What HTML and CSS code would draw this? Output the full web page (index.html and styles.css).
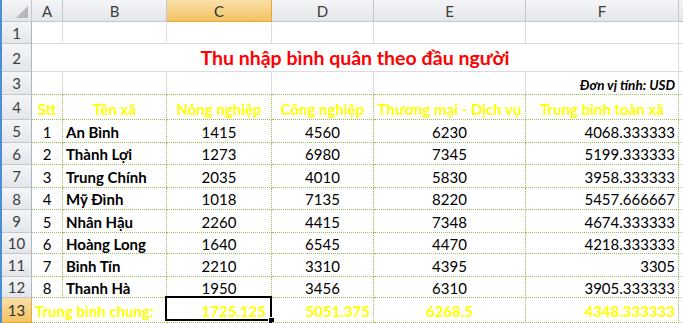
FILE: index.html
```html
<!DOCTYPE html>
<html lang="vi">
<head>
<meta charset="utf-8">
<title>Thu nhập bình quân</title>
<link rel="stylesheet" href="styles.css">
</head>
<body>
<div class="sheet">
  <div class="c h corner"><svg class="tri" width="12" height="12" viewBox="0 0 12 12"><polygon points="12,0 12,12 0,12" fill="#b4b8be"/></svg></div>
  <div class="c h">A</div>
  <div class="c h">B</div>
  <div class="c h hs">C</div>
  <div class="c h">D</div>
  <div class="c h">E</div>
  <div class="c h">F</div>
  <div class="c h"></div>

  <div class="c h rh">1</div>
  <div class="c"></div><div class="c"></div><div class="c"></div><div class="c"></div><div class="c"></div><div class="c"></div><div class="c"></div>

  <div class="c h rh">2</div>
  <div class="c title">Thu nhập bình quân theo đầu người</div>
  <div class="c"></div>

  <div class="c h rh">3</div>
  <div class="c tb"></div><div class="c tb"></div><div class="c tb"></div><div class="c tb"></div><div class="c tb"></div>
  <div class="c tb unit">Đơn vị tính: USD</div>
  <div class="c"></div>

  <div class="c h rh">4</div>
  <div class="c t th">Stt</div>
  <div class="c t th">Tên xã</div>
  <div class="c t th">Nông nghiệp</div>
  <div class="c t th">Công nghiệp</div>
  <div class="c t th">Thương mại - Dịch vụ</div>
  <div class="c t th">Trung bình toàn xã</div>
  <div class="c"></div>

  <div class="c h rh">5</div>
  <div class="c t ctr">1</div><div class="c t name">An Bình</div><div class="c t ctr">1415</div><div class="c t ctr">4560</div><div class="c t ctr">6230</div><div class="c t num">4068.333333</div>
  <div class="c"></div>

  <div class="c h rh">6</div>
  <div class="c t ctr">2</div><div class="c t name">Thành Lợi</div><div class="c t ctr">1273</div><div class="c t ctr">6980</div><div class="c t ctr">7345</div><div class="c t num">5199.333333</div>
  <div class="c"></div>

  <div class="c h rh">7</div>
  <div class="c t ctr">3</div><div class="c t name">Trung Chính</div><div class="c t ctr">2035</div><div class="c t ctr">4010</div><div class="c t ctr">5830</div><div class="c t num">3958.333333</div>
  <div class="c"></div>

  <div class="c h rh">8</div>
  <div class="c t ctr">4</div><div class="c t name">Mỹ Đình</div><div class="c t ctr">1018</div><div class="c t ctr">7135</div><div class="c t ctr">8220</div><div class="c t num">5457.666667</div>
  <div class="c"></div>

  <div class="c h rh">9</div>
  <div class="c t ctr">5</div><div class="c t name">Nhân Hậu</div><div class="c t ctr">2260</div><div class="c t ctr">4415</div><div class="c t ctr">7348</div><div class="c t num">4674.333333</div>
  <div class="c"></div>

  <div class="c h rh">10</div>
  <div class="c t ctr">6</div><div class="c t name">Hoàng Long</div><div class="c t ctr">1640</div><div class="c t ctr">6545</div><div class="c t ctr">4470</div><div class="c t num">4218.333333</div>
  <div class="c"></div>

  <div class="c h rh">11</div>
  <div class="c t ctr">7</div><div class="c t name">Bình Tín</div><div class="c t ctr">2210</div><div class="c t ctr">3310</div><div class="c t ctr">4395</div><div class="c t num">3305</div>
  <div class="c"></div>

  <div class="c h rh">12</div>
  <div class="c t ctr">8</div><div class="c t name">Thanh Hà</div><div class="c t ctr">1950</div><div class="c t ctr">3456</div><div class="c t ctr">6310</div><div class="c t num">3905.333333</div>
  <div class="c"></div>

  <div class="c h rh hs">13</div>
  <div class="c t tot label">Trung bình chung:</div>
  <div class="c t tot num sel">1725.125</div>
  <div class="c t tot num">5051.375</div>
  <div class="c t tot ctr">6268.5</div>
  <div class="c t tot num">4348.333333</div>
  <div class="c"></div>
</div>
</body>
</html>
```

FILE: styles.css
```css
html, body {
  margin: 0;
  padding: 0;
  background: #ffffff;
}

body {
  font-family: Lato, "Noto Sans", sans-serif;
  overflow: hidden;
}

.sheet {
  display: grid;
  grid-template-columns: 30px 31px 104px 105px 102px 152px 153px 1fr;
  grid-template-rows: 22px 22px 28px 23px 25px 23px 22px 23px 22px 23px 21px 23px 21px 25px;
  height: 323px;
  border-left: 2px solid #4b8fd6;
  overflow: hidden;
}

.c {
  box-sizing: border-box;
  border-right: 1px solid #dadcdd;
  border-bottom: 1px solid #dadcdd;
  display: flex;
  align-items: center;
  padding: 1px 3px 0 3px;
  font-size: 15px;
  color: #000;
  white-space: nowrap;
  overflow: hidden;
  position: relative;
}

.h {
  background: linear-gradient(#f4f5f7, #e3e6ea);
  border-right: 1px solid #c4c8ce;
  border-bottom: 1px solid #c4c8ce;
  justify-content: center;
  color: #3d3d3d;
  padding: 0;
  font-size: 15px;
}

.rh {
  border-right: 1px solid #aeb4bb;
}

.corner {
  justify-content: flex-end;
  align-items: flex-end;
  padding: 0 3px 3px 0;
}

.tri {
  display: block;
}

.hs {
  background: linear-gradient(#f9dfa8, #f2c462);
  border-right-color: #e3a53c;
  border-bottom-color: #e3a53c;
  color: #333;
}

.title {
  grid-column: span 6;
  justify-content: center;
  color: #ff0000;
  font-weight: 700;
  font-size: 19.5px;
  padding-top: 0;
}

.tb {
  border-bottom: 1px dotted #9bbb59;
}

.unit {
  justify-content: flex-end;
  font-weight: 700;
  font-style: italic;
  font-size: 13.5px;
  padding-top: 3px;
}

.t {
  border-right: 1px dotted #9bbb59;
  border-bottom: 1px dotted #9bbb59;
}

.th {
  justify-content: center;
  color: #ffff00;
  font-weight: 700;
  padding-top: 3px;
}

.ctr {
  justify-content: center;
}

.num {
  justify-content: flex-end;
}

.name {
  font-weight: 700;
}

.tot {
  color: #ffff00;
  font-weight: 700;
  padding-top: 2px;
}

.label {
  grid-column: span 2;
}

.sel {
  overflow: visible;
  padding-right: 5px;
}

.sel::before {
  content: "";
  position: absolute;
  left: -2px;
  top: -2px;
  right: -1px;
  bottom: 1px;
  border: 2px solid #000;
  pointer-events: none;
}

.sel::after {
  content: "";
  position: absolute;
  right: -4px;
  bottom: -2px;
  width: 5px;
  height: 5px;
  background: #000;
  border: 1px solid #fff;
}
```
